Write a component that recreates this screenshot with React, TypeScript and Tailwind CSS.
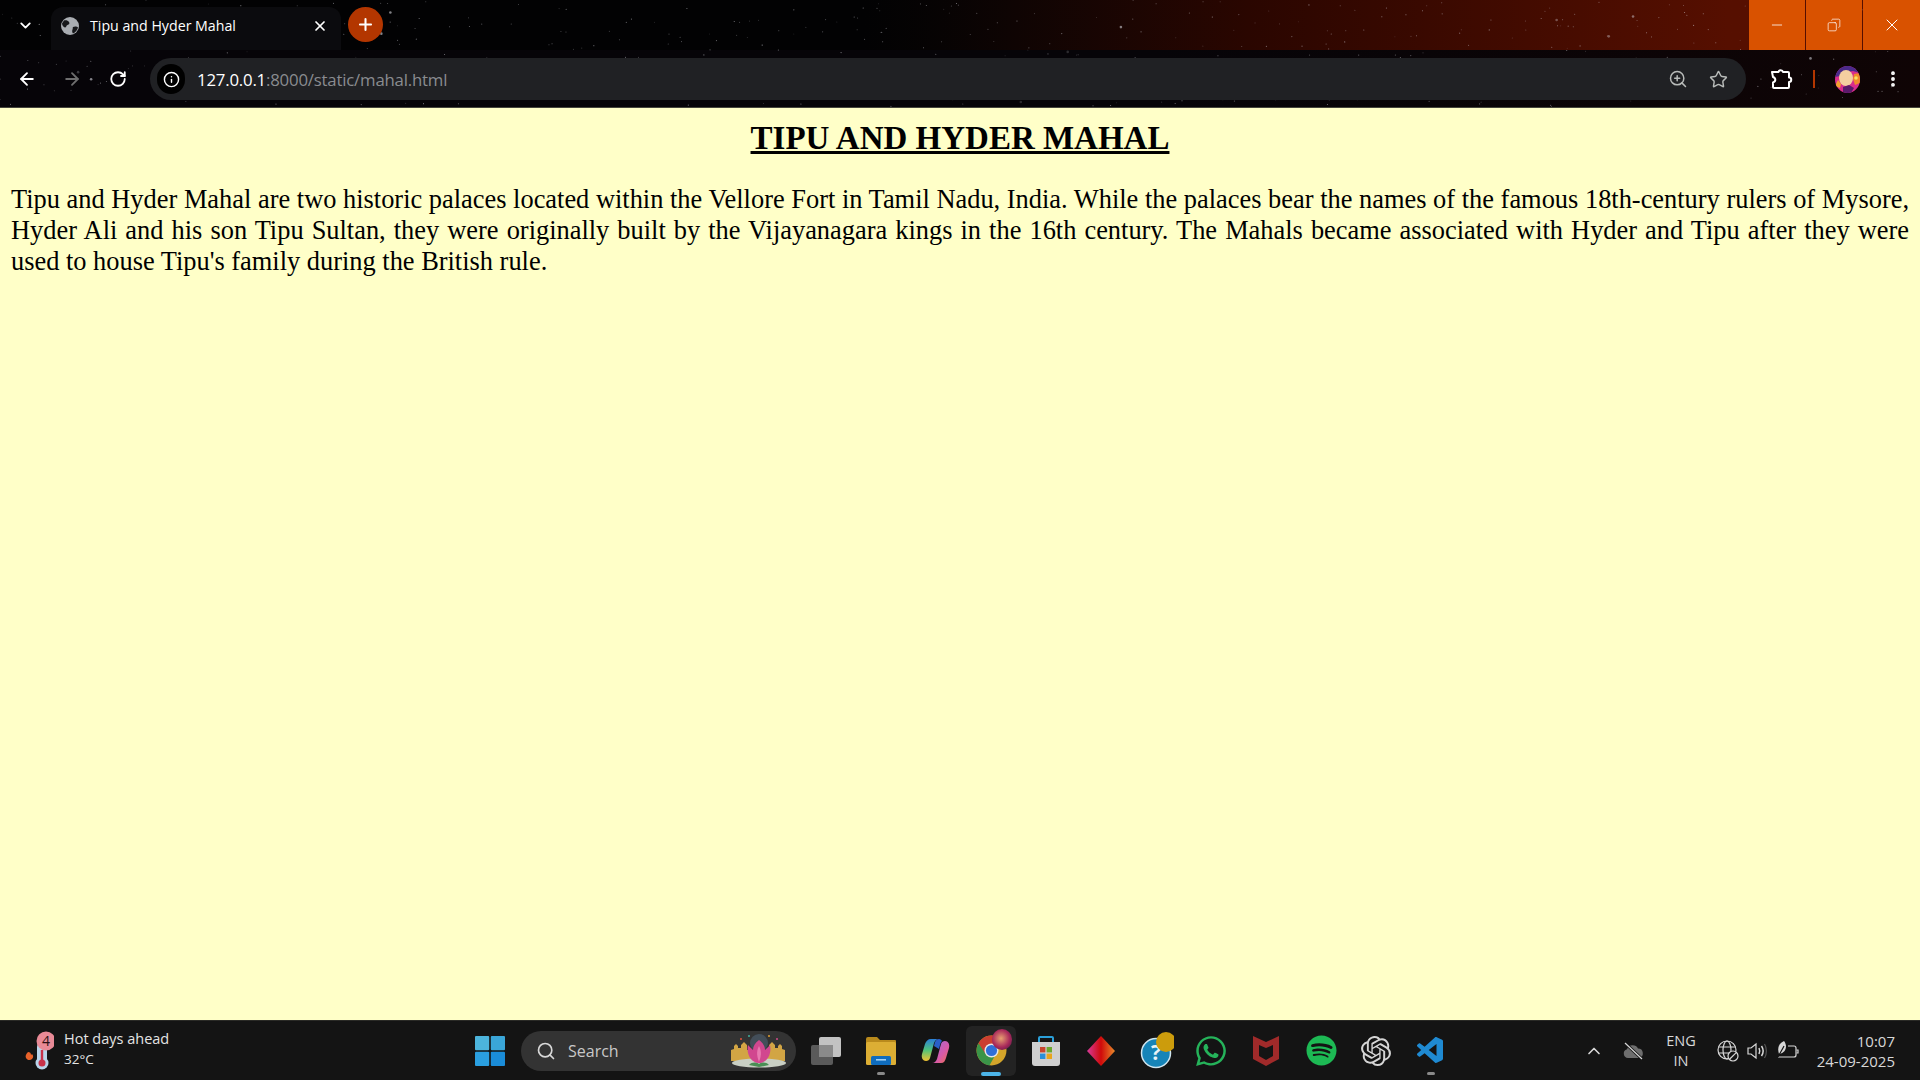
import { FC, ReactElement, ReactNode } from 'react';
import {
  ArrowLeft,
  ArrowRight,
  ChevronDown,
  ChevronUp,
  Copy,
  Info,
  Minus,
  MoreVertical,
  Plus,
  RotateCw,
  Search,
  Star,
  X,
  ZoomIn
} from 'lucide-react';
import { FaSpotify, FaWhatsapp } from 'react-icons/fa';
import { SiOpenai } from 'react-icons/si';
import { VscVscode } from 'react-icons/vsc';

const UI_FONT = "font-['Open_Sans','Noto_Sans',sans-serif]";

// seeded so the star field is the same on every load
const makeStars = (count: number, width: number, height: number): { x: number; y: number; r: number; o: number }[] => {
  let seed = 7;
  const next = (): number => {
    seed = (seed * 16807) % 2147483647;
    return seed / 2147483647;
  };
  return Array.from({ length: count }, () => ({
    x: next() * width,
    y: next() * height,
    r: next() > 0.96 ? 1.3 : 0.55,
    o: 0.15 + next() * 0.45
  }));
};

const stars = makeStars(520, 1920, 108);

const StarField: FC = (): ReactElement => (
  <svg className="pointer-events-none absolute inset-0" width="1920" height="108">
    {stars.map((s, i) => (
      <circle key={i} cx={s.x} cy={s.y} r={s.r} fill="#d8d8e0" opacity={s.o} />
    ))}
  </svg>
);

const WinButton: FC<{ children: ReactNode; wide?: boolean }> = ({ children, wide }): ReactElement => (
  <div className={`flex h-[50px] items-center justify-center bg-[#d95200] text-white ${wide ? 'w-[57px]' : 'w-[56px]'}`}>
    {children}
  </div>
);

const TabGlobe: FC = (): ReactElement => (
  <svg width="18" height="18" viewBox="0 0 18 18">
    <circle cx="9" cy="9" r="9" fill="#a9adb2" />
    <path d="M3 3.5c2-.5 4 0 5 1.500s0 2.500-1.500 3-1 2.500-2.500 2.500S1 8 1 6.500zM12 10c2-1 4-.5 5 .5-.5 2.500-2.500 5-5 6-1-1-1-3-.5-4s0-2 .5-2.500z" fill="#17181b" />
  </svg>
);

const ExtensionIcon: FC = (): ReactElement => (
  <svg width="24" height="24" viewBox="0 0 24 24" fill="none" stroke="#fff" strokeWidth="2" strokeLinejoin="round">
    <path d="M3 5h6.500a2.300 2.300 0 0 1 4.500 0H19a1 1 0 0 1 1 1v4.500a2.200 2.200 0 0 1 0 4.500v5a1 1 0 0 1-1 1H5a1 1 0 0 1-1-1v-4.500c1.500-.5 2.300-1.500 2.300-2.700S5.500 10.500 4 10z" />
  </svg>
);

const Avatar: FC = (): ReactElement => (
  <svg width="25" height="27" viewBox="0 0 25 27">
    <defs>
      <clipPath id="avClip">
        <ellipse cx="12.500" cy="13.500" rx="12.500" ry="13.500" />
      </clipPath>
    </defs>
    <g clipPath="url(#avClip)">
      <rect width="25" height="27" fill="#d92c8c" />
      <path d="M0 0h25v7l-7-2-6 1-7 4-5 1z" fill="#4a2a8a" />
      <ellipse cx="11" cy="12" rx="7" ry="8" fill="#f4cfa0" />
      <path d="M19 8l6-1v10l-5 2-2-6z" fill="#f08a2a" />
      <path d="M3 14l3 4-1 4-5-2z" fill="#f5a030" />
      <path d="M8 21l6-2 5 3-3 5H8z" fill="#5a1a6a" />
      <circle cx="21" cy="12" r="1.800" fill="#f8e060" />
    </g>
  </svg>
);

const TopBar: FC = (): ReactElement => (
  <div className={`relative h-[108px] bg-gradient-to-r from-[#060408] from-60% to-[#0f0405] ${UI_FONT}`}>
    <div className="absolute inset-x-0 top-0 h-[50px] bg-gradient-to-r from-[#020203] from-45% via-[#2a0600] via-65% to-[#560f00] to-90%" />
    <StarField />
    <div className="relative flex h-[50px] items-end">
      <div className="flex h-[50px] w-[51px] items-center justify-center text-white">
        <ChevronDown size={17} strokeWidth={2.6} />
      </div>
      <div className="flex h-[43px] w-[290px] items-center rounded-t-xl bg-[#0b0b0e] pb-[6px] pl-[10px] pr-[13px] text-white">
        <TabGlobe />
        <span className="ml-[11px] flex-1 text-[14.200px]">Tipu and Hyder Mahal</span>
        <X size={16} strokeWidth={2.6} />
      </div>
      <div className="mb-[8px] ml-[7px] flex h-[35px] w-[35px] items-center justify-center rounded-full bg-[#b33600] text-white">
        <Plus size={19} strokeWidth={2.6} />
      </div>
      <div className="ml-auto flex gap-px self-start">
        <WinButton>
          <Minus size={16} strokeWidth={1.2} />
        </WinButton>
        <WinButton>
          <Copy size={14} strokeWidth={1.2} className="-scale-x-100" />
        </WinButton>
        <WinButton wide>
          <X size={20} strokeWidth={1.2} />
        </WinButton>
      </div>
    </div>
    <div className="relative flex h-[58px] items-center pb-[8px] pt-[8px]">
      <div className="flex w-[150px] items-center pl-[17px] text-white">
        <ArrowLeft size={20} strokeWidth={2.2} />
        <ArrowRight size={20} strokeWidth={2.2} className="ml-[25px] text-[#6e6e6e]" />
        <RotateCw size={18} strokeWidth={2.4} className="ml-[27px]" />
      </div>
      <div className="flex h-[42px] w-[1596px] items-center rounded-full bg-[#202124] pl-[7px] pr-[18px]">
        <div className="flex h-[30px] w-[28px] items-center justify-center rounded-full bg-black text-white">
          <Info size={17} strokeWidth={2} />
        </div>
        <span className="ml-[12px] flex-1 pt-[1px] text-[16.800px] tracking-[-0.2px] text-white">
          127.0.0.1<span className="text-[#8a8c90]">:8000/static/mahal.html</span>
        </span>
        <ZoomIn size={20} strokeWidth={1.800} className="text-[#b8bbb9]" />
        <Star size={19} strokeWidth={1.800} className="ml-[21px] text-[#b8bbb9]" />
      </div>
      <div className="ml-[23px]">
        <ExtensionIcon />
      </div>
      <div className="ml-[20px] h-[18px] w-[2px] bg-[#b33600]" />
      <div className="ml-[20px]">
        <Avatar />
      </div>
      <MoreVertical size={20} strokeWidth={2.6} className="ml-[23px] text-white" />
    </div>
    <div className="absolute inset-x-0 bottom-0 h-px bg-[#45453c]" />
  </div>
);

const Page: FC = (): ReactElement => (
  <main className="h-[912px] bg-[#ffffc8] px-[11px] font-['Liberation_Serif',serif] text-black">
    <h1 className="pt-[12px] text-center text-[33px] font-bold leading-[37px] underline">TIPU AND HYDER MAHAL</h1>
    <p className="mt-[27px] text-justify text-[26.400px] leading-[30.900px]">
      Tipu and Hyder Mahal are two historic palaces located within the Vellore Fort in Tamil Nadu, India. While the
      palaces bear the names of the famous 18th-century rulers of Mysore, Hyder Ali and his son Tipu Sultan, they were
      originally built by the Vijayanagara kings in the 16th century. The Mahals became associated with Hyder and Tipu
      after they were used to house Tipu's family during the British rule.
    </p>
  </main>
);

const WeatherIcon: FC = (): ReactElement => (
  <svg width="32" height="42" viewBox="0 0 32 42">
    <path d="M6 22c-2 2-3 4-2 6s4 3 6 1 1-4 0-5l-1 1c0-2-1-3-3-3z" fill="#e8622a" />
    <rect x="15" y="12" width="10" height="24" rx="5" fill="#b9d4ea" />
    <circle cx="20" cy="33" r="6.500" fill="#b9d4ea" />
    <circle cx="20" cy="33" r="3.500" fill="#c8324a" />
    <rect x="18.800" y="20" width="2.400" height="12" fill="#c8324a" />
    <circle cx="24" cy="11" r="9.500" fill="#e88a96" />
    <text x="24" y="16" textAnchor="middle" fontSize="14" fill="#2a1014" fontFamily="Open Sans, sans-serif">
      4
    </text>
  </svg>
);

const WindowsLogo: FC = (): ReactElement => (
  <svg width="30" height="30" viewBox="0 0 30 30">
    <rect x="0" y="0" width="14.200" height="14.200" rx="1" fill="#4cb4dc" />
    <rect x="15.800" y="0" width="14.200" height="14.200" rx="1" fill="#3aa6d8" />
    <rect x="0" y="15.800" width="14.200" height="14.200" rx="1" fill="#2a9fe0" />
    <rect x="15.800" y="15.800" width="14.200" height="14.200" rx="1" fill="#1a8cd8" />
  </svg>
);

const LotusBadge: FC = (): ReactElement => (
  <svg width="60" height="36" viewBox="0 0 60 36">
    <circle cx="30" cy="10" r="9" fill="#4a5a6a" opacity="0.7" />
    <circle cx="12" cy="6" r="1" fill="#e0503a" />
    <circle cx="20" cy="3" r="1" fill="#40b0a0" />
    <circle cx="40" cy="3" r="1" fill="#e0a030" />
    <circle cx="48" cy="6" r="1" fill="#d04a8a" />
    <path d="M2 28V17l3-1V13l2-2 2 2v2h3v-3l3-3 3 3v5h22v-5l3-3 3 3v3h3v-2l2-2 2 2v3l3 1v11z" fill="#d2a544" />
    <ellipse cx="30" cy="30" rx="27" ry="4.500" fill="#c9cfc4" />
    <path d="M20 32c3-3 7-3 10-1 3-2 7-2 10 1l-10 2z" fill="#4a8f55" />
    <path d="M30 7c4 3 6 6 6 10 2-2 4-4 5-5 2 9-3 18-11 18s-13-9-11-18c1 1 3 3 5 5 0-4 2-7 6-10z" fill="#d1478f" />
    <path d="M30 13c2 4 3 8 0 16-3-8-2-12 0-16z" fill="#e87ab0" />
  </svg>
);

const TaskView: FC = (): ReactElement => (
  <svg width="32" height="30" viewBox="0 0 32 30">
    <rect x="1" y="9" width="22" height="20" rx="2" fill="#5a5a5a" />
    <rect x="9" y="1" width="22" height="20" rx="2" fill="#c2c2c2" />
    <rect x="9" y="9" width="14" height="12" fill="#8a8a8a" />
  </svg>
);

const FolderIcon: FC = (): ReactElement => (
  <svg width="32" height="30" viewBox="0 0 32 30">
    <path d="M1 3a2 2 0 0 1 2-2h9l3 3h15a1 1 0 0 1 1 1v3H1z" fill="#b98a1c" />
    <rect x="1" y="6" width="30" height="23" rx="1.500" fill="#dcae34" />
    <rect x="6" y="20" width="20" height="9" rx="1.500" fill="#0f6cbd" />
    <rect x="11" y="23" width="10" height="1.600" fill="#9fd0f5" />
  </svg>
);

const CopilotIcon: FC = (): ReactElement => (
  <svg width="30" height="30" viewBox="0 0 30 30">
    <defs>
      <linearGradient id="cpA" x1="0" y1="0" x2="0" y2="1">
        <stop offset="0" stopColor="#2a7fd8" />
        <stop offset="0.5" stopColor="#4fc27a" />
        <stop offset="1" stopColor="#f2c230" />
      </linearGradient>
      <linearGradient id="cpB" x1="0" y1="0" x2="1" y2="1">
        <stop offset="0" stopColor="#9a6ae0" />
        <stop offset="0.6" stopColor="#d85aa8" />
        <stop offset="1" stopColor="#f0704a" />
      </linearGradient>
    </defs>
    <path d="M10 3h8c-3 0-4 2-5 4l-4 15c-.5 2-2 3-4 3-3 0-5-3-4-7l3-10c1-3 3-5 6-5z" fill="url(#cpA)" />
    <path d="M20 27h-9c3 0 4-2 5-4l4-15c.5-2 2-3 4-3 3 0 5 3 4 7l-3 10c-1 3-2 5-5 5z" fill="url(#cpB)" />
    <path d="M18 3c-2 0-3 1-4 3l-1 4 5 3 1-4c.5-2 1-3 2-4-.5-1-1.500-2-3-2z" fill="#2a5fc8" />
  </svg>
);

const ChromeIcon: FC = (): ReactElement => (
  <div className="relative">
    <svg width="31" height="31" viewBox="0 0 30 30">
      <circle cx="15" cy="15" r="14.500" fill="#d4a52a" />
      <path d="M15 .5A14.500 14.500 0 0 0 2.400 8L9 19.500 15 9h12.600A14.500 14.500 0 0 0 15 .5z" fill="#cc3f30" />
      <path d="M2.400 8A14.500 14.500 0 0 0 13 29.400L19.500 18H9z" fill="#3a9448" />
      <circle cx="15" cy="15" r="6.800" fill="#e8e8e8" />
      <circle cx="15" cy="15" r="5.400" fill="#2f6fd8" />
    </svg>
    <div className="absolute -right-[5px] -top-[6px] h-[21px] w-[20px] overflow-hidden rounded-full bg-[radial-gradient(circle_at_45%_45%,#e8a070,#a8285a_55%,#3a1a40)]" />
  </div>
);

const StoreIcon: FC = (): ReactElement => (
  <svg width="30" height="32" viewBox="0 0 30 32">
    <path d="M8 8V3a1 1 0 0 1 1-1h12a1 1 0 0 1 1 1v5" fill="none" stroke="#2a9fd8" strokeWidth="2" />
    <path d="M1 7h28v21a3 3 0 0 1-3 3H4a3 3 0 0 1-3-3z" fill="#cfcfcf" />
    <rect x="9" y="12" width="5.400" height="5.400" fill="#c8452e" />
    <rect x="15.600" y="12" width="5.400" height="5.400" fill="#6aa82e" />
    <rect x="9" y="18.600" width="5.400" height="5.400" fill="#2a8fd8" />
    <rect x="15.600" y="18.600" width="5.400" height="5.400" fill="#e8a51c" />
  </svg>
);

const DiamondIcon: FC = (): ReactElement => (
  <svg width="30" height="32" viewBox="0 0 30 32">
    <defs>
      <linearGradient id="dmA" x1="0" y1="0" x2="1" y2="0">
        <stop offset="0" stopColor="#d83a9a" />
        <stop offset="0.5" stopColor="#d00a0a" />
        <stop offset="1" stopColor="#e88a2a" />
      </linearGradient>
    </defs>
    <path d="M15 1l14 15-14 15L1 16z" fill="url(#dmA)" />
  </svg>
);

const HelpIcon: FC = (): ReactElement => (
  <svg width="36" height="38" viewBox="-3 0 36 38">
    <circle cx="15" cy="21" r="14.500" fill="#1684b8" stroke="#cfe4ee" strokeWidth="1.500" />
    <text x="15" y="28" textAnchor="middle" fontSize="21" fontWeight="700" fill="#e8f2f6" fontFamily="Open Sans, sans-serif">
      ?
    </text>
    <circle cx="25" cy="10" r="10" fill="#cc9c0c" />
  </svg>
);

const McAfeeIcon: FC = (): ReactElement => (
  <svg width="28" height="32" viewBox="0 0 28 32">
    <path d="M1 1l13 6 13-6v23l-13 7-13-7zM7 10v11l7 4 7-4V10l-7 3z" fill="#a02a2a" fillRule="evenodd" />
  </svg>
);

const TrayCloud: FC = (): ReactElement => (
  <svg width="22" height="18" viewBox="0 0 22 18">
    <path d="M6 16a4.500 4.500 0 0 1-1-8.800A6 6 0 0 1 16 6.500 4.800 4.800 0 0 1 17 16z" fill="#6e6e6e" />
    <path d="M3 1l17 16" stroke="#141414" strokeWidth="3" />
    <path d="M3 1l17 16" stroke="#d8d8d8" strokeWidth="1.200" />
  </svg>
);

const TrayGlobe: FC = (): ReactElement => (
  <svg width="22" height="22" viewBox="0 0 22 22" fill="none" stroke="#d8d8d8" strokeWidth="1.200">
    <circle cx="10" cy="10" r="9" />
    <ellipse cx="10" cy="10" rx="4" ry="9" />
    <path d="M1.500 7h17M1.500 13h17" />
    <circle cx="16" cy="16" r="5" fill="#141414" />
    <path d="M12.800 19l6.400-6.400" />
  </svg>
);

const TrayVolume: FC = (): ReactElement => (
  <svg width="22" height="20" viewBox="0 0 22 20" fill="none" stroke="#d8d8d8" strokeWidth="1.200">
    <path d="M2 7h3l5-4v14l-5-4H2z" />
    <path d="M13 7c1 2 1 4 0 6M15.500 5c2 3 2 7 0 10" strokeWidth="1.500" />
    <path d="M18.500 3c2.500 4 2.500 10 0 14" stroke="#555" />
  </svg>
);

const TrayBattery: FC = (): ReactElement => (
  <svg width="24" height="22" viewBox="0 0 24 22" fill="none" stroke="#d8d8d8" strokeWidth="1.200">
    <path d="M12 6h6a2 2 0 0 1 2 2v7a2 2 0 0 1-2 2H2" />
    <path d="M20.500 10h1.500v3h-1.500" />
    <path d="M8 1C3 3 1 8 3 14c5-1 7-4 7-8 0-1-1-4-2-5z" fill="#d8d8d8" stroke="none" />
    <path d="M2 17c2-4 4-7 6-11" stroke="#141414" />
  </svg>
);

const Dock: FC<{ children: ReactNode; mark?: 'dot' | 'active'; active?: boolean }> = ({
  children,
  mark,
  active
}): ReactElement => (
  <div
    className={`relative flex h-[50px] w-[50px] items-center justify-center rounded-md ${
      active ? 'bg-[#232323]' : ''
    }`}
  >
    {children}
    {mark === 'dot' && <div className="absolute bottom-[1px] h-[3px] w-[8px] rounded-full bg-[#8a8a8a]" />}
    {mark === 'active' && <div className="absolute bottom-0 h-[4px] w-[20px] rounded-full bg-[#4cb4e8]" />}
  </div>
);

const Taskbar: FC = (): ReactElement => (
  <div className={`flex h-[60px] items-center border-t border-[#2a2a26] bg-[#141414] ${UI_FONT} text-white`}>
    <div className="flex w-[475px] items-center pl-[22px]">
      <WeatherIcon />
      <div className="mb-[3px] ml-[10px] text-[14.500px] leading-[20px] text-[#e4e4e4]">
        <div>Hot days ahead</div>
        <div className="text-[13.500px]">32°C</div>
      </div>
    </div>
    <WindowsLogo />
    <div className="ml-[16px] flex h-[40px] w-[275px] items-center rounded-full bg-[#333333] pl-[15px] pr-[7px]">
      <Search size={20} strokeWidth={2} className="text-[#d8d8d8]" />
      <span className="ml-[12px] flex-1 text-[16px] text-[#c8c8c8]">Search</span>
      <LotusBadge />
    </div>
    <div className="ml-[5px] flex gap-[5px]">
      <Dock>
        <TaskView />
      </Dock>
      <Dock mark="dot">
        <FolderIcon />
      </Dock>
      <Dock>
        <CopilotIcon />
      </Dock>
      <Dock mark="active" active>
        <ChromeIcon />
      </Dock>
      <Dock>
        <StoreIcon />
      </Dock>
      <Dock>
        <DiamondIcon />
      </Dock>
      <Dock>
        <HelpIcon />
      </Dock>
      <Dock>
        <FaWhatsapp size={34} className="text-[#25b35a]" />
      </Dock>
      <Dock>
        <McAfeeIcon />
      </Dock>
      <Dock>
        <FaSpotify size={31} className="text-[#1db954]" />
      </Dock>
      <Dock>
        <SiOpenai size={30} className="text-[#d4d4d4]" />
      </Dock>
      <Dock mark="dot">
        <VscVscode size={32} className="text-[#1f8ad2]" />
      </Dock>
    </div>
    <div className="ml-[128px] flex items-center text-[#d8d8d8]">
      <ChevronUp size={20} strokeWidth={2} />
      <div className="ml-[18px]">
        <TrayCloud />
      </div>
      <div className="ml-[15px] w-[44px] text-center text-[14.500px] leading-[20px]">
        <div>ENG</div>
        <div>IN</div>
      </div>
      <div className="ml-[14px]">
        <TrayGlobe />
      </div>
      <div className="ml-[7px]">
        <TrayVolume />
      </div>
      <div className="ml-[8px]">
        <TrayBattery />
      </div>
      <div className="w-[95px] text-right text-[15px] leading-[20px]">
        <div>10:07</div>
        <div>24-09-2025</div>
      </div>
    </div>
  </div>
);

const App: FC = (): ReactElement => {
  return (
    <div className="h-[1080px] w-[1920px] overflow-hidden">
      <TopBar />
      <Page />
      <Taskbar />
    </div>
  );
};

export default App;
